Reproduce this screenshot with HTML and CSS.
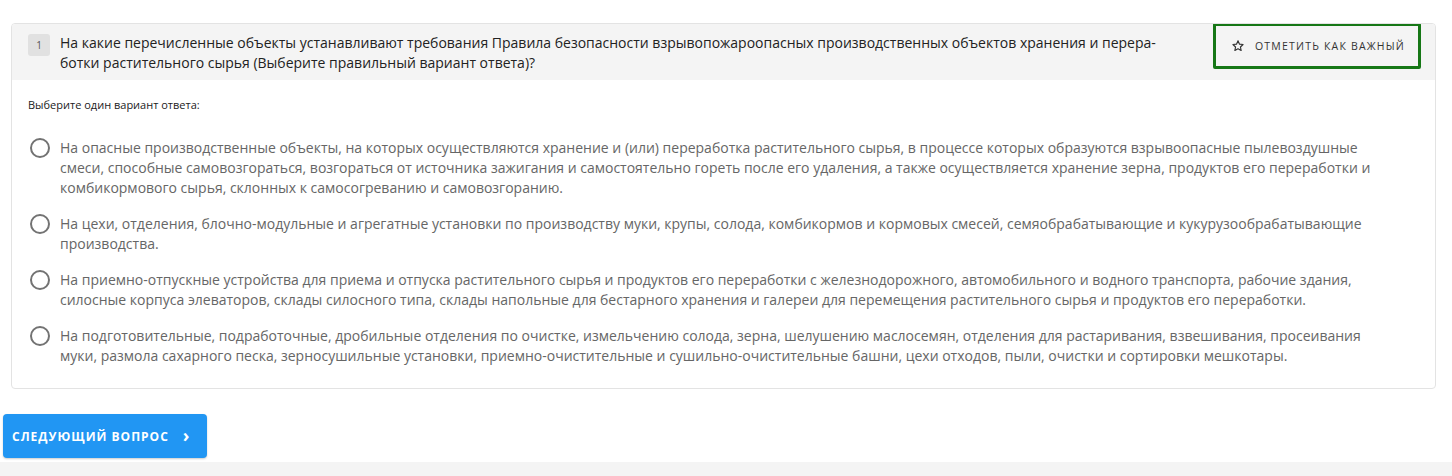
FILE: index.html
```html
<!DOCTYPE html>
<html lang="ru">
<head>
    <meta charset="UTF-8">
    <meta name="viewport" content="width=device-width, initial-scale=1.0">
    <title>Вопрос</title>
    <link rel="stylesheet" href="styles.css">
</head>
<body>
    <div class="page">
        <!-- Карточка вопроса -->
        <div class="question-card">
            <div class="question-head">
                <span class="q-number">1</span>
                <div class="q-text">На какие перечисленные объекты устанавливают требования Правила безопасности взрывопожароопасных производственных объектов хранения и перера-<br>ботки растительного сырья (Выберите правильный вариант ответа)?</div>
                <button class="mark-btn">
                    <svg class="star" viewBox="0 0 24 24" width="14" height="14"><path d="M12 3.2l2.6 5.6 6.1.7-4.5 4.2 1.2 6-5.4-3-5.4 3 1.2-6-4.5-4.2 6.1-.7z" fill="none" stroke="#333" stroke-width="2" stroke-linejoin="round"/></svg>
                    <span>Отметить как важный</span>
                </button>
            </div>
            <div class="question-body">
                <div class="hint">Выберите один вариант ответа:</div>
                <label class="option">
                    <span class="radio"></span>
                    <span class="option-text">На опасные производственные объекты, на которых осуществляются хранение и (или) переработка растительного сырья, в процессе которых образуются взрывоопасные пылевоздушные смеси, способные самовозгораться, возгораться от источника зажигания и самостоятельно гореть после его удаления, а также осуществляется хранение зерна, продуктов его переработки и комбикормового сырья, склонных к самосогреванию и самовозгоранию.</span>
                </label>
                <label class="option">
                    <span class="radio"></span>
                    <span class="option-text">На цехи, отделения, блочно-модульные и агрегатные установки по производству муки, крупы, солода, комбикормов и кормовых смесей, семяобрабатывающие и кукурузообрабатывающие производства.</span>
                </label>
                <label class="option">
                    <span class="radio"></span>
                    <span class="option-text">На приемно-отпускные устройства для приема и отпуска растительного сырья и продуктов его переработки с железнодорожного, автомобильного и водного транспорта, рабочие здания, силосные корпуса элеваторов, склады силосного типа, склады напольные для бестарного хранения и галереи для перемещения растительного сырья и продуктов его переработки.</span>
                </label>
                <label class="option">
                    <span class="radio"></span>
                    <span class="option-text">На подготовительные, подработочные, дробильные отделения по очистке, измельчению солода, зерна, шелушению маслосемян, отделения для растаривания, взвешивания, просеивания муки, размола сахарного песка, зерносушильные установки, приемно-очистительные и сушильно-очистительные башни, цехи отходов, пыли, очистки и сортировки мешкотары.</span>
                </label>
            </div>
        </div>

        <button class="next-btn">Следующий вопрос <span class="chev">&#8250;</span></button>
    </div>
    <div class="footer-strip"></div>
</body>
</html>
```

FILE: styles.css
```css
* {
    margin: 0;
    padding: 0;
    box-sizing: border-box;
}

body {
    font-family: "Open Sans", "Noto Sans", sans-serif;
    background: #fff;
    color: #333;
}

.page {
    padding: 23px 16px 0 11px;
}

.question-card {
    width: 1425px;
    border: 1px solid #e3e3e3;
    border-radius: 4px;
    overflow: hidden;
}

/* Шапка с вопросом */
.question-head {
    display: flex;
    align-items: flex-start;
    background: #f4f4f4;
    padding: 9px 14px 7px 16px;
}

.q-number {
    flex: none;
    width: 22px;
    height: 22px;
    margin-top: 1px;
    border-radius: 3px;
    background: #e1e1e1;
    color: #555;
    font-size: 10px;
    line-height: 22px;
    text-align: center;
}

.q-text {
    flex: 1;
    padding-left: 10px;
    font-size: 14px;
    line-height: 20px;
    color: #222;
}

.mark-btn {
    flex: none;
    display: flex;
    align-items: center;
    gap: 10px;
    margin-top: -10px;
    width: 208px;
    height: 46px;
    padding: 0 10px 0 15px;
    background: #f4f4f4;
    border: 3px solid #167716;
    border-radius: 2px;
    font-family: inherit;
    font-size: 10.5px;
    letter-spacing: 1.2px;
    white-space: nowrap;
    text-transform: uppercase;
    color: #333;
    cursor: pointer;
}

/* Варианты ответа */
.question-body {
    padding: 17px 40px 22px 16px;
}

.hint {
    font-size: 11px;
    color: #222;
    margin-bottom: 26px;
}

.option {
    display: flex;
    align-items: flex-start;
    margin-bottom: 16px;
    cursor: pointer;
}

.option:last-child {
    margin-bottom: 0;
}

.radio {
    flex: none;
    width: 20px;
    height: 20px;
    margin: 0 10px 0 2px;
    border: 2px solid #737373;
    border-radius: 50%;
}

.option-text {
    font-size: 14px;
    line-height: 20px;
    color: #666;
}

/* Кнопка далее */
.next-btn {
    display: flex;
    align-items: center;
    margin: 25px 0 0 -8px;
    height: 44px;
    padding: 0 17px 0 9px;
    background: #2196f3;
    border: none;
    border-radius: 4px;
    box-shadow: 0 1px 2px rgba(0,0,0,0.2);
    color: #fff;
    font-family: inherit;
    font-size: 12px;
    font-weight: 700;
    letter-spacing: 1px;
    text-transform: uppercase;
    cursor: pointer;
}

.chev {
    margin-left: 14px;
    font-size: 18px;
    line-height: 1;
    margin-top: -3px;
}

.footer-strip {
    margin-top: 4px;
    height: 20px;
    background: #f4f4f4;
}
```
